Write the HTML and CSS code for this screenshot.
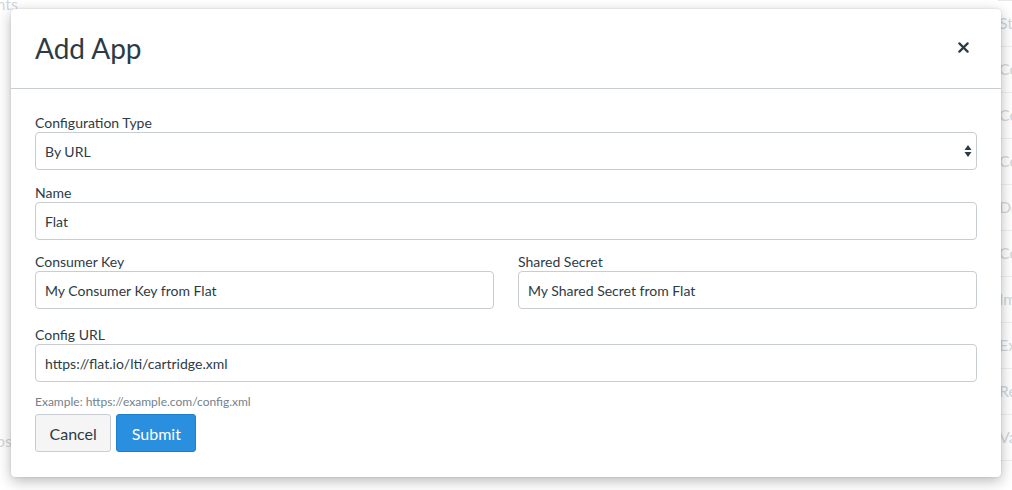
FILE: index.html
```html
<!DOCTYPE html>
<html lang="en">
  <head>
    <meta charset="UTF-8" />
    <title>Add App</title>
    <link rel="stylesheet" href="styles.css">
  </head>
  <body>
    <div class="page">
      <div class="side">
        <span class="side-top">Assignments</span>
        <span class="side-bottom">Apps</span>
      </div>
      <ul class="table">
        <li>Status</li>
        <li>Configurations</li>
        <li>Course Setup</li>
        <li>Course Import</li>
        <li>Delete Course</li>
        <li>Conclude Course</li>
        <li>Import Content</li>
        <li>Export Content</li>
        <li>Reset Course</li>
        <li>Validate Links</li>
      </ul>
    </div>

    <div class="modal">
      <header class="modal-header">
        <h2>Add App</h2>
        <button class="close" aria-label="Close">
          <svg viewBox="0 0 12 12" width="11" height="11">
            <path d="M1.5 1.5 L10.5 10.5 M10.5 1.5 L1.5 10.5" stroke="#2d3b45" stroke-width="2.4" stroke-linecap="round" />
          </svg>
        </button>
      </header>

      <form class="modal-body">
        <div class="field">
          <label>Configuration Type</label>
          <div class="select">
            <span>By URL</span>
            <svg viewBox="0 0 8 14" width="8" height="14">
              <path d="M4 1 L7.5 6 H0.5 Z M4 13 L7.5 8 H0.5 Z" fill="#2d3b45" />
            </svg>
          </div>
        </div>

        <div class="field">
          <label>Name</label>
          <div class="input">Flat</div>
        </div>

        <div class="row">
          <div class="field">
            <label>Consumer Key</label>
            <div class="input">My Consumer Key from Flat</div>
          </div>
          <div class="field">
            <label>Shared Secret</label>
            <div class="input">My Shared Secret from Flat</div>
          </div>
        </div>

        <div class="field last">
          <label>Config URL</label>
          <div class="input">https://flat.io/lti/cartridge.xml</div>
          <p class="hint">Example: https://example.com/config.xml</p>
        </div>

        <div class="actions">
          <button type="button" class="btn">Cancel</button>
          <button type="button" class="btn primary">Submit</button>
        </div>
      </form>
    </div>
  </body>
</html>
```

FILE: styles.css
```css
*,
*::before,
*::after {
  box-sizing: border-box;
}

body {
  font-family: Lato, 'Open Sans', sans-serif;
  background: #fff;
  color: #2d3b45;
  margin: 0;
  width: 1012px;
  height: 490px;
  overflow: hidden;
  position: relative;
}

.page {
  display: flex;
  justify-content: space-between;
  height: 100%;
  color: #d3d7da;
  font-size: 16px;
}

.side {
  display: flex;
  flex-direction: column;
  justify-content: space-between;
  width: 20px;
  overflow: hidden;
  padding: 0 0 40px;

  span {
    display: block;
    white-space: nowrap;
    direction: rtl;
  }

  .side-top {
    margin-top: -6px;
    width: 18px;
    overflow: hidden;
  }

  .side-bottom {
    width: 12px;
    overflow: hidden;
  }
}

.table {
  list-style: none;
  margin: 0;
  padding: 0;
  width: 14px;
  overflow: hidden;
  border-top: 1px solid #e6e8ea;

  li {
    height: 46px;
    line-height: 44px;
    border-bottom: 1px solid #eef0f1;
    white-space: nowrap;
    padding-left: 1px;
  }
}

.modal {
  position: absolute;
  top: 9px;
  left: 11px;
  width: 990px;
  background: #fff;
  border-radius: 4px;
  box-shadow: 0 4px 14px rgba(0, 0, 0, 0.28), 0 0 2px rgba(0, 0, 0, 0.15);
}

.modal-header {
  display: flex;
  justify-content: space-between;
  align-items: center;
  height: 80px;
  padding: 0 24px;
  border-bottom: 1px solid #c7cdd1;

  h2 {
    margin: 0;
    font-size: 28px;
    font-weight: 400;
    line-height: 1;
    padding-bottom: 1px;
  }

  .close {
    background: none;
    border: 0;
    padding: 0;
    margin-right: 8px;
    margin-bottom: 2px;
    display: flex;
  }
}

.modal-body {
  padding: 22px 24px 25px;
  display: flex;
  flex-direction: column;
}

.field {
  display: flex;
  flex-direction: column;
  margin-bottom: 11px;
  flex: 1;

  label {
    font-size: 14px;
    line-height: 16px;
    padding-top: 4px;
    margin-bottom: 1px;
  }
}

.field.last {
  margin-bottom: 0;
}

.row {
  display: flex;
  gap: 24px;
  margin-top: -1px;

  .field {
    margin-bottom: 14px;
  }
}

.input,
.select {
  height: 38px;
  border: 1px solid #c7cdd1;
  border-radius: 4px;
  padding: 0 9px;
  font-size: 14px;
  display: flex;
  align-items: center;
}

.select {
  justify-content: space-between;
  padding-right: 4px;
}

.hint {
  margin: 12px 0 4px;
  font-size: 12px;
  line-height: 16px;
  color: #73818c;
}

.actions {
  display: flex;
  gap: 5px;
}

.btn {
  font-family: inherit;
  font-size: 16px;
  height: 38px;
  padding: 0 13.5px;
  border-radius: 3px;
  border: 1px solid #c7cdd1;
  background: #f5f5f5;
  color: #2d3b45;
}

.btn.primary {
  background: #2b8fe0;
  border-color: #1f7fcf;
  color: #fff;
  padding: 0 14.5px;
}
```
